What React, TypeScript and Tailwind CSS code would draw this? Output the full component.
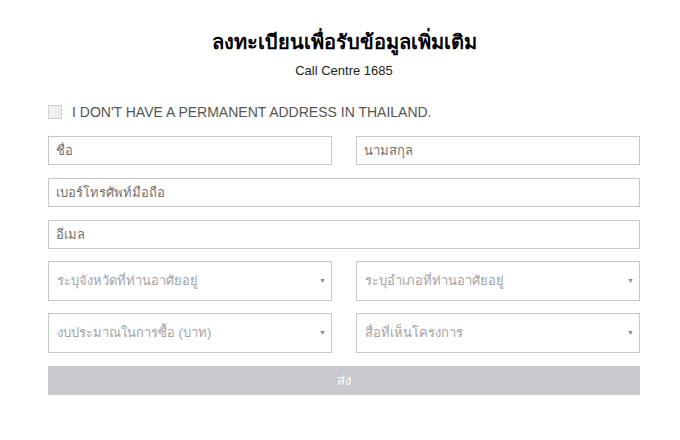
import React from "react";

const font = { fontFamily: '"Liberation Sans", "Noto Sans", "Noto Sans CJK SC", sans-serif' };

function Field({ label }: { label: string }) {
  return (
    <div className="flex h-[29px] items-center border border-[#c8c8c8] bg-white px-[7px] text-[13px] text-[#707070]">
      {label}
    </div>
  );
}

function Select({ label }: { label: string }) {
  return (
    <div className="flex h-[40px] items-center justify-between border border-[#c8c8c8] bg-white pl-[8px] pr-[5px] text-[13px] text-[#a3a3a3]">
      <span>{label}</span>
      <span className="text-[7px] text-[#8a8a8a]">▼</span>
    </div>
  );
}

export default function App() {
  return (
    <div className="h-[440px] w-[680px] bg-white" style={font}>
      <div className="ml-[48px] w-[592px] pt-[28px]">
        <h1 className="text-center text-[20px] font-bold leading-[28px] text-black">ลงทะเบียนเพื่อรับข้อมูลเพิ่มเติม</h1>
        <p className="mt-[7px] text-center text-[13px] leading-[16px] text-[#222]">Call Centre 1685</p>

        <label className="mt-[25px] flex items-center gap-[10px]">
          <span className="h-[14px] w-[14px] border border-[#d0d0d0] bg-[#efefef]" />
          <span className="text-[14px] uppercase leading-[16px] text-[#555]">I DON'T HAVE A PERMANENT ADDRESS IN THAILAND.</span>
        </label>

        <div className="mt-[16px] grid grid-cols-2 gap-[24px]">
          <Field label="ชื่อ" />
          <Field label="นามสกุล" />
        </div>
        <div className="mt-[13px]">
          <Field label="เบอร์โทรศัพท์มือถือ" />
        </div>
        <div className="mt-[13px]">
          <Field label="อีเมล" />
        </div>

        <div className="mt-[12px] grid grid-cols-2 gap-[24px]">
          <Select label="ระบุจังหวัดที่ท่านอาศัยอยู่" />
          <Select label="ระบุอำเภอที่ท่านอาศัยอยู่" />
        </div>
        <div className="mt-[12px] grid grid-cols-2 gap-[24px]">
          <Select label="งบประมาณในการซื้อ (บาท)" />
          <Select label="สื่อที่เห็นโครงการ" />
        </div>

        <button className="mt-[13px] flex h-[29px] w-full items-center justify-center bg-[#c8c9cc] text-[13px] text-white">
          ส่ง
        </button>
      </div>
    </div>
  );
}
